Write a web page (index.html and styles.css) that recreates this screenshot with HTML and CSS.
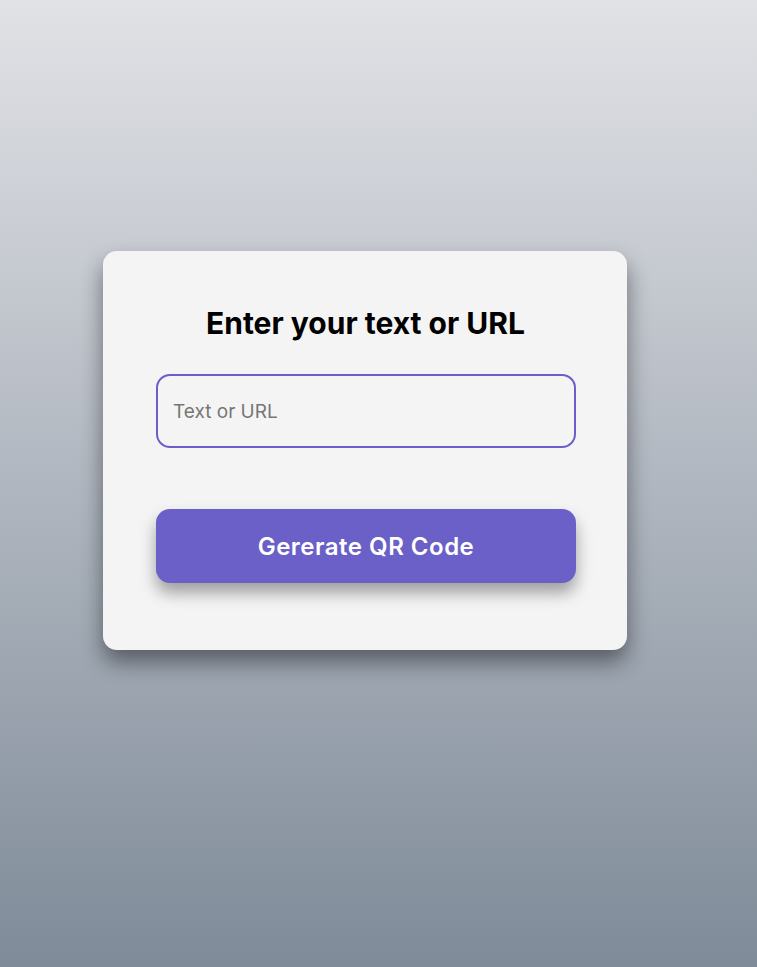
FILE: index.html
```html
<!DOCTYPE html>
<html lang="en">
<head>
<meta charset="utf-8">
<title>QR Code Generator</title>
<link rel="stylesheet" href="styles.css">
</head>
<body>
<main class="page">
  <section class="card">
    <h1 class="title">Enter your text or URL</h1>
    <input class="field" type="text" placeholder="Text or URL">
    <button class="btn" type="button">Gererate QR Code</button>
  </section>
</main>
</body>
</html>
```
FILE: styles.css
```css
* { box-sizing: border-box; }
html, body { margin: 0; height: 100%; }
body {
  font-family: "Inter", "Open Sans", sans-serif;
  background: linear-gradient(180deg, #e1e2e6 0%, #7f8b99 100%);
  min-height: 967px;
}
.page {
  display: flex;
  justify-content: flex-start;
  padding: 251px 0 0 103px;
}
.card {
  width: 524px;
  height: 399px;
  background: #f4f4f4;
  border-radius: 14px;
  box-shadow: 0 12px 22px rgba(0, 0, 0, 0.45);
  padding: 52px 52px 0 53px;
  display: flex;
  flex-direction: column;
}
.title {
  margin: 0 0 31px;
  font-size: 30px;
  line-height: 40px;
  font-weight: 700;
  text-align: center;
  color: #000;
  letter-spacing: 0;
}
.field {
  width: 420px;
  height: 74px;
  border: 2px solid #6a5fc9;
  border-radius: 14px;
  background: #f4f4f4;
  padding: 0 15px;
  font-family: inherit;
  font-size: 19px;
  color: #333;
  outline: none;
}
.field::placeholder { color: #767676; }
.btn {
  margin-top: 61px;
  width: 420px;
  height: 74px;
  border: none;
  border-radius: 14px;
  background: #6b5fc8;
  color: #fff;
  font-family: inherit;
  font-size: 24px;
  font-weight: 600;
  letter-spacing: 0.5px;
  box-shadow: 0 10px 16px rgba(0, 0, 0, 0.35);
  cursor: pointer;
}
```
